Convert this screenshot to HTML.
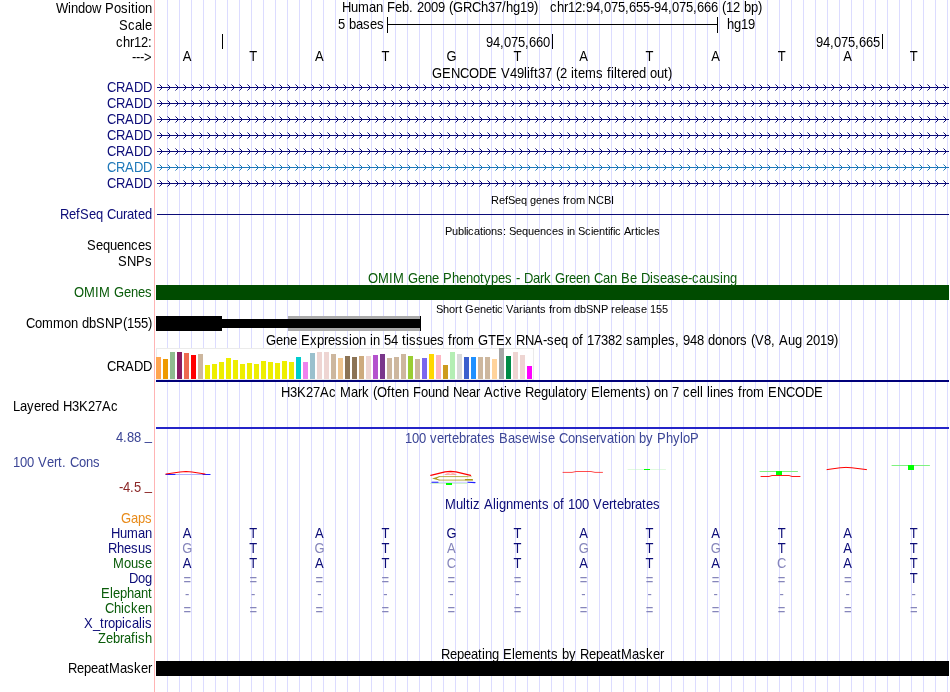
<!DOCTYPE html>
<html><head><meta charset="utf-8"><title>UCSC Genome Browser</title>
<style>
html,body{margin:0;padding:0;background:#fff}
svg{display:block;will-change:transform}
text{font-family:"Liberation Sans",sans-serif;font-size:14px;fill:#000}
.s{font-size:11px}
</style></head><body>
<svg width="950" height="692" viewBox="0 0 950 692">
<defs>
<pattern id="cv" x="156" y="80" width="8" height="16" patternUnits="userSpaceOnUse"><g fill="#0c0c78" shape-rendering="crispEdges"><rect x="0" y="7" width="8" height="1"/><rect x="5" y="6" width="1" height="1"/><rect x="5" y="8" width="1" height="1"/><rect x="4" y="5" width="1" height="1"/><rect x="4" y="9" width="1" height="1"/><rect x="3" y="4" width="1" height="1" opacity=".55"/><rect x="3" y="10" width="1" height="1" opacity=".55"/></g></pattern>
<pattern id="cw" x="156" y="80" width="8" height="16" patternUnits="userSpaceOnUse"><g fill="#1e78b9" shape-rendering="crispEdges"><rect x="0" y="7" width="8" height="1"/><rect x="5" y="6" width="1" height="1"/><rect x="5" y="8" width="1" height="1"/><rect x="4" y="5" width="1" height="1"/><rect x="4" y="9" width="1" height="1"/><rect x="3" y="4" width="1" height="1" opacity=".55"/><rect x="3" y="10" width="1" height="1" opacity=".55"/></g></pattern>
</defs>
<rect width="950" height="692" fill="#fff"/>
<g fill="#dcdcff" shape-rendering="crispEdges">
<rect x="167" y="0" width="1" height="692"/><rect x="179" y="0" width="1" height="692"/><rect x="191" y="0" width="1" height="692"/><rect x="203" y="0" width="1" height="692"/><rect x="215" y="0" width="1" height="692"/><rect x="227" y="0" width="1" height="692"/><rect x="239" y="0" width="1" height="692"/><rect x="251" y="0" width="1" height="692"/><rect x="263" y="0" width="1" height="692"/><rect x="275" y="0" width="1" height="692"/><rect x="287" y="0" width="1" height="692"/><rect x="299" y="0" width="1" height="692"/><rect x="311" y="0" width="1" height="692"/><rect x="323" y="0" width="1" height="692"/><rect x="335" y="0" width="1" height="692"/><rect x="347" y="0" width="1" height="692"/><rect x="359" y="0" width="1" height="692"/><rect x="371" y="0" width="1" height="692"/><rect x="383" y="0" width="1" height="692"/><rect x="395" y="0" width="1" height="692"/><rect x="407" y="0" width="1" height="692"/><rect x="419" y="0" width="1" height="692"/><rect x="431" y="0" width="1" height="692"/><rect x="443" y="0" width="1" height="692"/><rect x="455" y="0" width="1" height="692"/><rect x="467" y="0" width="1" height="692"/><rect x="479" y="0" width="1" height="692"/><rect x="491" y="0" width="1" height="692"/><rect x="503" y="0" width="1" height="692"/><rect x="515" y="0" width="1" height="692"/><rect x="527" y="0" width="1" height="692"/><rect x="539" y="0" width="1" height="692"/><rect x="551" y="0" width="1" height="692"/><rect x="563" y="0" width="1" height="692"/><rect x="575" y="0" width="1" height="692"/><rect x="587" y="0" width="1" height="692"/><rect x="599" y="0" width="1" height="692"/><rect x="611" y="0" width="1" height="692"/><rect x="623" y="0" width="1" height="692"/><rect x="635" y="0" width="1" height="692"/><rect x="647" y="0" width="1" height="692"/><rect x="659" y="0" width="1" height="692"/><rect x="671" y="0" width="1" height="692"/><rect x="683" y="0" width="1" height="692"/><rect x="695" y="0" width="1" height="692"/><rect x="707" y="0" width="1" height="692"/><rect x="719" y="0" width="1" height="692"/><rect x="731" y="0" width="1" height="692"/><rect x="743" y="0" width="1" height="692"/><rect x="755" y="0" width="1" height="692"/><rect x="767" y="0" width="1" height="692"/><rect x="779" y="0" width="1" height="692"/><rect x="791" y="0" width="1" height="692"/><rect x="803" y="0" width="1" height="692"/><rect x="815" y="0" width="1" height="692"/><rect x="827" y="0" width="1" height="692"/><rect x="839" y="0" width="1" height="692"/><rect x="851" y="0" width="1" height="692"/><rect x="863" y="0" width="1" height="692"/><rect x="875" y="0" width="1" height="692"/><rect x="887" y="0" width="1" height="692"/><rect x="899" y="0" width="1" height="692"/><rect x="911" y="0" width="1" height="692"/><rect x="923" y="0" width="1" height="692"/><rect x="935" y="0" width="1" height="692"/><rect x="947" y="0" width="1" height="692"/>
</g>
<rect x="154" y="0" width="1" height="692" fill="#ffb4b4" shape-rendering="crispEdges"/>
<g fill="#000" shape-rendering="crispEdges"><rect x="387" y="24" width="331" height="1"/><rect x="387" y="17" width="1" height="16"/><rect x="717" y="17" width="1" height="16"/><rect x="222" y="34" width="1" height="15"/><rect x="552" y="34" width="1" height="15"/><rect x="882" y="34" width="1" height="15"/></g>
<rect x="157" y="80" width="792" height="16" fill="url(#cv)"/>
<rect x="157" y="96" width="792" height="16" fill="url(#cv)"/>
<rect x="157" y="112" width="792" height="16" fill="url(#cv)"/>
<rect x="157" y="128" width="792" height="16" fill="url(#cv)"/>
<rect x="157" y="144" width="792" height="16" fill="url(#cv)"/>
<rect x="157" y="160" width="792" height="16" fill="url(#cw)"/>
<rect x="157" y="176" width="792" height="16" fill="url(#cv)"/>
<rect x="157" y="214" width="792" height="1" fill="#0c0c78" shape-rendering="crispEdges"/>
<rect x="156" y="285" width="793" height="15" fill="#004b00" shape-rendering="crispEdges"/>
<g shape-rendering="crispEdges"><rect x="288" y="316" width="132" height="15" fill="#aaa"/><rect x="156" y="316" width="66" height="15" fill="#000"/><rect x="222" y="319" width="198" height="9" fill="#000"/><rect x="420" y="316" width="1" height="15" fill="#000"/></g>
<g shape-rendering="crispEdges"><rect x="156" y="348" width="378" height="32" fill="#fff"/><rect x="156" y="348" width="378" height="1" fill="#ebebeb"/><rect x="156" y="379" width="378" height="1" fill="#ebebeb"/><rect x="156" y="348" width="1" height="32" fill="#ebebeb"/><rect x="533" y="348" width="1" height="32" fill="#ebebeb"/>
<rect x="156" y="357" width="5" height="22" fill="#FFA54F"/><rect x="163" y="359" width="5" height="20" fill="#EE9A00"/><rect x="170" y="352" width="5" height="27" fill="#8FBC8F"/><rect x="177" y="352" width="5" height="27" fill="#8B1C62"/><rect x="184" y="353" width="5" height="26" fill="#EE6A50"/><rect x="191" y="355" width="5" height="24" fill="#FF0000"/><rect x="198" y="354" width="5" height="25" fill="#CDB79E"/><rect x="205" y="365" width="5" height="14" fill="#EEEE00"/><rect x="212" y="364" width="5" height="15" fill="#EEEE00"/><rect x="219" y="362" width="5" height="17" fill="#EEEE00"/><rect x="226" y="358" width="5" height="21" fill="#EEEE00"/><rect x="233" y="360" width="5" height="19" fill="#EEEE00"/><rect x="240" y="364" width="5" height="15" fill="#EEEE00"/><rect x="247" y="363" width="5" height="16" fill="#EEEE00"/><rect x="254" y="364" width="5" height="15" fill="#EEEE00"/><rect x="261" y="361" width="5" height="18" fill="#EEEE00"/><rect x="268" y="362" width="5" height="17" fill="#EEEE00"/><rect x="275" y="363" width="5" height="16" fill="#EEEE00"/><rect x="282" y="361" width="5" height="18" fill="#EEEE00"/><rect x="289" y="362" width="5" height="17" fill="#EEEE00"/><rect x="296" y="357" width="5" height="22" fill="#00CDCD"/><rect x="303" y="362" width="5" height="17" fill="#EE82EE"/><rect x="310" y="353" width="5" height="26" fill="#9AC0CD"/><rect x="317" y="352" width="5" height="27" fill="#EED5D2"/><rect x="324" y="352" width="5" height="27" fill="#EED5D2"/><rect x="331" y="354" width="5" height="25" fill="#CDB79E"/><rect x="338" y="358" width="5" height="21" fill="#EEC591"/><rect x="345" y="356" width="5" height="23" fill="#8B7355"/><rect x="352" y="357" width="5" height="22" fill="#8B7355"/><rect x="359" y="356" width="5" height="23" fill="#CDAA7D"/><rect x="366" y="356" width="5" height="23" fill="#EED5D2"/><rect x="373" y="355" width="5" height="24" fill="#B452CD"/><rect x="380" y="354" width="5" height="25" fill="#7A378B"/><rect x="387" y="358" width="5" height="21" fill="#CDB79E"/><rect x="394" y="357" width="5" height="22" fill="#CDB79E"/><rect x="401" y="354" width="5" height="25" fill="#CDB79E"/><rect x="408" y="356" width="5" height="23" fill="#9ACD32"/><rect x="415" y="359" width="5" height="20" fill="#CDB79E"/><rect x="422" y="358" width="5" height="21" fill="#7A67EE"/><rect x="429" y="354" width="5" height="25" fill="#FFD700"/><rect x="436" y="355" width="5" height="24" fill="#FFB6C1"/><rect x="443" y="365" width="5" height="14" fill="#CD9B1D"/><rect x="450" y="352" width="5" height="27" fill="#B4EEB4"/><rect x="457" y="354" width="5" height="25" fill="#D9D9D9"/><rect x="464" y="357" width="5" height="22" fill="#3A5FCD"/><rect x="471" y="357" width="5" height="22" fill="#1E90FF"/><rect x="478" y="357" width="5" height="22" fill="#CDB79E"/><rect x="485" y="357" width="5" height="22" fill="#CDB79E"/><rect x="492" y="359" width="5" height="20" fill="#FFD39B"/><rect x="499" y="348" width="5" height="31" fill="#A6A6A6"/><rect x="506" y="356" width="5" height="23" fill="#008B45"/><rect x="513" y="352" width="5" height="27" fill="#EED5D2"/><rect x="520" y="355" width="5" height="24" fill="#EED5D2"/><rect x="527" y="366" width="5" height="13" fill="#FF00FF"/>
<rect x="156" y="380" width="793" height="2" fill="#00007a"/></g>
<rect x="156" y="427" width="793" height="2" fill="#2424c8" shape-rendering="crispEdges"/>
<g fill="none" stroke-width="1.2" stroke-linecap="round" stroke-linejoin="round">
<path d="M166 474.5H210" stroke="#b0b0ff" stroke-width="1"/><path d="M166 474.5H175M203 474.5H210" stroke="#2020ff" stroke-width="1"/>
<path d="M166 474 L180 472 L186 471.5 L192 472 L205 474" stroke="#f00"/>
<path d="M430.8 475.4 L445 471.9 L450.5 471.3 L456 471.9 L470.6 475.4" stroke="#f00" stroke-width="1.2"/><path d="M445 474.5H456M446 474.2L450.5 472.7L455 474.2" stroke="#ff8c8c" stroke-width="0.7"/>
<path d="M439 476.6H468M439 480.1H472.6" stroke="#a89a1a" stroke-width="0.8"/><path d="M468 476.6H471.5" stroke="#cfc680" stroke-width="0.8"/><path d="M439.5 476.2 L432 478.4 L439.5 480.5 L439.5 479.7 L436.5 478.4 L439.5 477 Z" fill="#a89a1a" stroke="none"/><path d="M465.5 479.7H472.3" stroke="#a89a1a" stroke-width="1.3"/>
<path d="M432 482.3H475" stroke="#c8c8ff" stroke-width="0.9"/><path d="M432 482.3H438M468 482.3L475 482.6" stroke="#2020ff" stroke-width="1.1"/>
<path d="M430.5 483.5H467" stroke="#b0f0b0" stroke-width="0.6"/><rect x="446" y="483" width="6" height="2" fill="#0f0" stroke="none" shape-rendering="crispEdges"/>
<path d="M563 472.4 H572 L576 471.5 H591 L595 472.4 H602.5" stroke="#f00" stroke-width="0.7"/>
<path d="M628 469.5H665.5" stroke="#c0f4c0" stroke-width="0.5"/><rect x="644" y="469" width="6" height="1" fill="#0f0" stroke="none" shape-rendering="crispEdges"/>
<path d="M760 471.5H797.5" stroke="#70f070" stroke-width="0.9"/><rect x="776" y="471" width="6" height="4" fill="#0f0" stroke="none" shape-rendering="crispEdges"/>
<path d="M761 476.5 H769 L772 475.5 H789 L792 476.5 H800" stroke="#f00" stroke-width="0.9"/>
<path d="M827 469.6 L840 467.8 L846 467.4 L852 467.8 L866.5 469.6" stroke="#f00" stroke-width="1"/>
<path d="M892 465.5H929.5" stroke="#70f070" stroke-width="0.9"/><rect x="908" y="465" width="6" height="5" fill="#0f0" stroke="none" shape-rendering="crispEdges"/>
</g>
<rect x="156" y="661" width="793" height="15" fill="#000" shape-rendering="crispEdges"/>
<text transform="translate(56.00 13) scale(0.92857 1)" x="0 12.9 16.2 23.7 31.2 38.8 48.5 52.8 62.5 70 77.5 80.8 85.1 88.3 95.8" y="0">Window Position</text>
<text transform="translate(119.00 30) scale(0.92857 1)" x="0 9.7 17.2 24.8 28" y="0">Scale</text>
<text transform="translate(116.00 47) scale(0.92857 1)" x="0 7.5 15.1 19.4 26.9 34.5" y="0">chr12:</text>
<text transform="translate(132.00 62) scale(0.92857 1)" x="0 4.3 8.6 12.9" y="0">---&gt;</text>
<text transform="translate(107.00 92) scale(0.92857 1)" x="0 9.7 19.4 29.1 38.8" y="0" fill="#0c0c78" style="fill:#0c0c78">CRADD</text>
<text transform="translate(107.00 108) scale(0.92857 1)" x="0 9.7 19.4 29.1 38.8" y="0" fill="#0c0c78" style="fill:#0c0c78">CRADD</text>
<text transform="translate(107.00 124) scale(0.92857 1)" x="0 9.7 19.4 29.1 38.8" y="0" fill="#0c0c78" style="fill:#0c0c78">CRADD</text>
<text transform="translate(107.00 140) scale(0.92857 1)" x="0 9.7 19.4 29.1 38.8" y="0" fill="#0c0c78" style="fill:#0c0c78">CRADD</text>
<text transform="translate(107.00 156) scale(0.92857 1)" x="0 9.7 19.4 29.1 38.8" y="0" fill="#0c0c78" style="fill:#0c0c78">CRADD</text>
<text transform="translate(107.00 172) scale(0.92857 1)" x="0 9.7 19.4 29.1 38.8" y="0" fill="#1e78b9" style="fill:#1e78b9">CRADD</text>
<text transform="translate(107.00 188) scale(0.92857 1)" x="0 9.7 19.4 29.1 38.8" y="0" fill="#0c0c78" style="fill:#0c0c78">CRADD</text>
<text transform="translate(60.00 219) scale(0.92857 1)" x="0 9.7 17.2 21.5 31.2 38.8 46.3 50.6 60.3 67.8 72.2 79.7 84 91.5" y="0" fill="#0c0c78" style="fill:#0c0c78">RefSeq Curated</text>
<text transform="translate(87.00 250) scale(0.92857 1)" x="0 9.7 17.2 24.8 32.3 39.8 47.4 54.9 62.5" y="0">Sequences</text>
<text transform="translate(118.00 266) scale(0.92857 1)" x="0 9.7 19.4 29.1" y="0">SNPs</text>
<text transform="translate(74.00 297) scale(0.92857 1)" x="0 10.8 22.6 26.9 38.8 43.1 53.8 61.4 68.9 76.5" y="0" fill="#0a5c0a" style="fill:#0a5c0a">OMIM Genes</text>
<text transform="translate(26.00 328) scale(0.92857 1)" x="0 9.7 17.2 29.1 40.9 48.5 56 60.3 67.8 75.4 85.1 94.8 104.5 108.8 116.3 123.8 131.4" y="0">Common dbSNP(155)</text>
<text transform="translate(107.00 371) scale(0.92857 1)" x="0 9.7 19.4 29.1 38.8" y="0">CRADD</text>
<text transform="translate(13.00 411) scale(0.92857 1)" x="0 7.5 15.1 22.6 30.2 34.5 42 49.5 53.8 63.5 71.1 80.8 88.3 95.8 105.5" y="0">Layered H3K27Ac</text>
<text transform="translate(116.00 442) scale(0.92857 1)" x="0 7.5 11.8 19.4" y="0" fill="#3c4696" style="fill:#3c4696">4.88</text>
<text transform="translate(144.66 440) scale(0.92857 1)" x="0" y="0" fill="#3c4696" style="fill:#3c4696">_</text>
<text transform="translate(13.00 467) scale(0.92857 1)" x="0 7.5 15.1 22.6 26.9 36.6 44.2 48.5 52.8 57.1 61.4 71.1 78.6 86.2" y="0" fill="#3c4696" style="fill:#3c4696">100 Vert. Cons</text>
<text transform="translate(119.00 492) scale(0.92857 1)" x="0 4.3 11.8 16.2" y="0" fill="#8c2828" style="fill:#8c2828">-4.5</text>
<text transform="translate(144.66 490) scale(0.92857 1)" x="0" y="0" fill="#8c2828" style="fill:#8c2828">_</text>
<text transform="translate(121.00 523) scale(0.92857 1)" x="0 10.8 18.3 25.8" y="0" fill="#e88b1a" style="fill:#e88b1a">Gaps</text>
<text transform="translate(111.00 538) scale(0.92857 1)" x="0 9.7 17.2 29.1 36.6" y="0" fill="#0c0c78" style="fill:#0c0c78">Human</text>
<text transform="translate(108.00 553) scale(0.92857 1)" x="0 9.7 17.2 24.8 32.3 39.8" y="0" fill="#0c0c78" style="fill:#0c0c78">Rhesus</text>
<text transform="translate(113.00 568) scale(0.92857 1)" x="0 11.8 19.4 26.9 34.5" y="0" fill="#0a5c0a" style="fill:#0a5c0a">Mouse</text>
<text transform="translate(129.00 583) scale(0.92857 1)" x="0 9.7 17.2" y="0" fill="#0c0c78" style="fill:#0c0c78">Dog</text>
<text transform="translate(101.00 598) scale(0.92857 1)" x="0 9.7 12.9 20.5 28 35.5 43.1 50.6" y="0" fill="#0a5c0a" style="fill:#0a5c0a">Elephant</text>
<text transform="translate(105.00 613) scale(0.92857 1)" x="0 9.7 17.2 20.5 28 35.5 43.1" y="0" fill="#0a5c0a" style="fill:#0a5c0a">Chicken</text>
<text transform="translate(84.00 628) scale(0.92857 1)" x="0 9.7 17.2 21.5 25.8 33.4 40.9 44.2 51.7 59.2 62.5 65.7" y="0" fill="#0c0c78" style="fill:#0c0c78">X_tropicalis</text>
<text transform="translate(98.00 643) scale(0.92857 1)" x="0 8.6 16.2 23.7 28 35.5 39.8 43.1 50.6" y="0" fill="#0a5c0a" style="fill:#0a5c0a">Zebrafish</text>
<text transform="translate(68.00 673) scale(0.92857 1)" x="0 9.7 17.2 24.8 32.3 39.8 44.2 56 63.5 71.1 78.6 86.2" y="0">RepeatMasker</text>
<text transform="translate(342.00 12) scale(0.92857 1)" x="0 9.7 17.2 29.1 36.6 44.2 48.5 57.1 64.6 72.2 76.5 80.8 88.3 95.8 103.4 110.9 115.2 119.5 130.3 140 149.7 157.2 164.8 172.3 176.6 184.2 191.7 199.2 206.8" y="0">Human Feb. 2009 (GRCh37/hg19)</text>
<text transform="translate(550.00 12) scale(0.92857 1)" x="0 7.5 15.1 19.4 26.9 34.5 38.8 46.3 53.8 58.2 65.7 73.2 80.8 85.1 92.6 100.2 107.7 112 119.5 127.1 131.4 138.9 146.5 154 158.3 165.8 173.4 180.9 185.2 189.5 197.1 204.6 208.9 216.5 224" y="0">chr12:94,075,655-94,075,666 (12 bp)</text>
<text transform="translate(338.00 29) scale(0.92857 1)" x="0 7.5 11.8 19.4 26.9 34.5 42" y="0">5 bases</text>
<text transform="translate(727.00 29) scale(0.92857 1)" x="0 7.5 15.1 22.6" y="0">hg19</text>
<text transform="translate(486.00 47) scale(0.92857 1)" x="0 7.5 15.1 19.4 26.9 34.5 42 46.3 53.8 61.4" y="0">94,075,660</text>
<text transform="translate(816.00 47) scale(0.92857 1)" x="0 7.5 15.1 19.4 26.9 34.5 42 46.3 53.8 61.4" y="0">94,075,665</text>
<text transform="translate(182.86 61) scale(0.92857 1)" x="0" y="0">A</text>
<text transform="translate(249.29 61) scale(0.92857 1)" x="0" y="0">T</text>
<text transform="translate(314.96 61) scale(0.92857 1)" x="0" y="0">A</text>
<text transform="translate(381.39 61) scale(0.92857 1)" x="0" y="0">T</text>
<text transform="translate(446.55 61) scale(0.92857 1)" x="0" y="0">G</text>
<text transform="translate(513.49 61) scale(0.92857 1)" x="0" y="0">T</text>
<text transform="translate(579.16 61) scale(0.92857 1)" x="0" y="0">A</text>
<text transform="translate(645.59 61) scale(0.92857 1)" x="0" y="0">T</text>
<text transform="translate(711.26 61) scale(0.92857 1)" x="0" y="0">A</text>
<text transform="translate(777.69 61) scale(0.92857 1)" x="0" y="0">T</text>
<text transform="translate(843.36 61) scale(0.92857 1)" x="0" y="0">A</text>
<text transform="translate(909.79 61) scale(0.92857 1)" x="0" y="0">T</text>
<text transform="translate(432.00 78) scale(0.92857 1)" x="0 10.8 20.5 30.2 39.8 50.6 60.3 70 74.3 84 91.5 99.1 102.3 105.5 109.8 114.2 121.7 129.2 133.5 137.8 145.4 149.7 152.9 157.2 164.8 176.6 184.2 188.5 192.8 196 199.2 203.5 211.1 215.4 222.9 230.5 234.8 242.3 249.8 254.2" y="0">GENCODE V49lift37 (2 items filtered out)</text>
<text transform="translate(491.00 204) scale(1.00000 1)" x="0 8 14 17 24 30 36 39 45 51 57 63 69 72 75 79 85 94 97 105 113 120" y="0" class="s">RefSeq genes from NCBI</text>
<text transform="translate(445.00 235) scale(1.00000 1)" x="0 7 13 19 21 23 29 35 38 40 46 52 58 61 64 71 77 83 89 95 101 107 113 119 122 124 130 133 140 146 148 154 160 163 165 168 170 176 179 186 190 193 195 201 203 209" y="0" class="s">Publications: Sequences in Scientific Articles</text>
<text transform="translate(368.00 283) scale(0.92857 1)" x="0 10.8 22.6 26.9 38.8 43.1 53.8 61.4 68.9 76.5 80.8 90.5 98 105.5 113.1 120.6 124.9 132.5 140 147.5 155.1 159.4 163.7 168 177.7 185.2 189.5 197.1 201.4 212.2 216.5 224 231.5 239.1 243.4 253.1 260.6 268.2 272.5 282.2 289.7 294 303.7 306.9 314.5 322 329.5 337.1 344.6 348.9 356.5 364 371.5 379.1 382.3 389.8" y="0" fill="#0a5c0a" style="fill:#0a5c0a">OMIM Gene Phenotypes - Dark Green Can Be Disease-causing</text>
<text transform="translate(436.00 313) scale(1.00000 1)" x="0 7 13 19 23 26 29 38 44 50 56 59 61 67 70 77 83 87 89 95 101 104 110 113 116 120 126 135 138 144 150 157 165 172 175 179 185 187 193 199 205 211 214 220 226" y="0" class="s">Short Genetic Variants from dbSNP release 155</text>
<text transform="translate(266.00 345) scale(0.92857 1)" x="0 10.8 18.3 25.8 33.4 37.7 47.4 54.9 62.5 66.8 74.3 81.8 89.4 92.6 100.2 107.7 112 115.2 122.8 127.1 134.6 142.2 146.5 150.8 154 161.5 169.1 176.6 184.2 191.7 196 200.3 204.6 212.2 224 228.3 239.1 247.7 257.4 264.9 269.2 278.9 288.6 298.3 302.6 310.2 317.7 325.2 329.5 337.1 341.4 345.7 353.2 360.8 368.3 375.8 383.4 387.7 395.2 402.8 414.6 422.2 425.4 432.9 440.5 444.8 449.1 456.6 464.2 471.7 476 483.5 491.1 498.6 506.2 510.5 518 522.3 526.6 536.3 543.8 548.2 552.5 562.2 569.7 577.2 581.5 589.1 596.6 604.2 611.7" y="0">Gene Expression in 54 tissues from GTEx RNA-seq of 17382 samples, 948 donors (V8, Aug 2019)</text>
<text transform="translate(281.00 397) scale(0.92857 1)" x="0 9.7 17.2 26.9 34.5 42 51.7 59.2 63.5 75.4 82.9 87.2 94.8 99.1 103.4 114.2 118.5 122.8 130.3 137.8 142.2 150.8 158.3 165.8 173.4 180.9 185.2 194.9 202.5 210 214.3 218.6 228.3 235.8 240.2 243.4 250.9 258.5 262.8 272.5 280 287.5 295.1 298.3 305.8 310.2 317.7 322 329.5 333.8 343.5 346.8 354.3 366.2 373.7 381.2 385.5 393.1 397.4 401.7 409.2 416.8 421.1 428.6 432.9 440.5 448 451.2 454.5 458.8 462 465.2 472.8 480.3 487.8 492.2 496.5 500.8 508.3 520.2 524.5 534.2 543.8 553.5 564.3 574" y="0">H3K27Ac Mark (Often Found Near Active Regulatory Elements) on 7 cell lines from ENCODE</text>
<text transform="translate(405.00 443) scale(0.92857 1)" x="0 7.5 15.1 22.6 26.9 34.5 42 46.3 50.6 58.2 65.7 70 77.5 81.8 89.4 96.9 101.2 110.9 118.5 126 133.5 143.2 146.5 154 161.5 165.8 175.5 183.1 190.6 198.2 205.7 210 217.5 225.1 229.4 232.6 240.2 247.7 252 259.5 267.1 271.4 281.1 288.6 296.2 299.4 306.9" y="0" fill="#3c4696" style="fill:#3c4696">100 vertebrates Basewise Conservation by PhyloP</text>
<text transform="translate(445.00 509) scale(0.92857 1)" x="0 11.8 19.4 22.6 26.9 30.2 37.7 42 51.7 54.9 58.2 65.7 73.2 85.1 92.6 100.2 104.5 112 116.3 123.8 128.2 132.5 140 147.5 155.1 159.4 169.1 176.6 180.9 185.2 192.8 200.3 204.6 212.2 216.5 224" y="0" fill="#0c0c78" style="fill:#0c0c78">Multiz Alignments of 100 Vertebrates</text>
<text transform="translate(441.00 659) scale(0.92857 1)" x="0 9.7 17.2 24.8 32.3 39.8 44.2 47.4 54.9 62.5 66.8 76.5 79.7 87.2 99.1 106.6 114.2 118.5 126 130.3 137.8 145.4 149.7 159.4 166.9 174.5 182 189.5 193.8 205.7 213.2 220.8 228.3 235.8" y="0">Repeating Elements by RepeatMasker</text>
<text transform="translate(182.86 538) scale(0.92857 1)" x="0" y="0" fill="#0c0c78" style="fill:#0c0c78">A</text>
<text transform="translate(249.29 538) scale(0.92857 1)" x="0" y="0" fill="#0c0c78" style="fill:#0c0c78">T</text>
<text transform="translate(314.96 538) scale(0.92857 1)" x="0" y="0" fill="#0c0c78" style="fill:#0c0c78">A</text>
<text transform="translate(381.39 538) scale(0.92857 1)" x="0" y="0" fill="#0c0c78" style="fill:#0c0c78">T</text>
<text transform="translate(446.55 538) scale(0.92857 1)" x="0" y="0" fill="#0c0c78" style="fill:#0c0c78">G</text>
<text transform="translate(513.49 538) scale(0.92857 1)" x="0" y="0" fill="#0c0c78" style="fill:#0c0c78">T</text>
<text transform="translate(579.16 538) scale(0.92857 1)" x="0" y="0" fill="#0c0c78" style="fill:#0c0c78">A</text>
<text transform="translate(645.59 538) scale(0.92857 1)" x="0" y="0" fill="#0c0c78" style="fill:#0c0c78">T</text>
<text transform="translate(711.26 538) scale(0.92857 1)" x="0" y="0" fill="#0c0c78" style="fill:#0c0c78">A</text>
<text transform="translate(777.69 538) scale(0.92857 1)" x="0" y="0" fill="#0c0c78" style="fill:#0c0c78">T</text>
<text transform="translate(843.36 538) scale(0.92857 1)" x="0" y="0" fill="#0c0c78" style="fill:#0c0c78">A</text>
<text transform="translate(909.79 538) scale(0.92857 1)" x="0" y="0" fill="#0c0c78" style="fill:#0c0c78">T</text>
<text transform="translate(182.35 553) scale(0.92857 1)" x="0" y="0" fill="#8686bb" style="fill:#8686bb">G</text>
<text transform="translate(249.29 553) scale(0.92857 1)" x="0" y="0" fill="#0c0c78" style="fill:#0c0c78">T</text>
<text transform="translate(314.45 553) scale(0.92857 1)" x="0" y="0" fill="#8686bb" style="fill:#8686bb">G</text>
<text transform="translate(381.39 553) scale(0.92857 1)" x="0" y="0" fill="#0c0c78" style="fill:#0c0c78">T</text>
<text transform="translate(447.06 553) scale(0.92857 1)" x="0" y="0" fill="#8686bb" style="fill:#8686bb">A</text>
<text transform="translate(513.49 553) scale(0.92857 1)" x="0" y="0" fill="#0c0c78" style="fill:#0c0c78">T</text>
<text transform="translate(578.65 553) scale(0.92857 1)" x="0" y="0" fill="#8686bb" style="fill:#8686bb">G</text>
<text transform="translate(645.59 553) scale(0.92857 1)" x="0" y="0" fill="#0c0c78" style="fill:#0c0c78">T</text>
<text transform="translate(710.75 553) scale(0.92857 1)" x="0" y="0" fill="#8686bb" style="fill:#8686bb">G</text>
<text transform="translate(777.69 553) scale(0.92857 1)" x="0" y="0" fill="#0c0c78" style="fill:#0c0c78">T</text>
<text transform="translate(843.36 553) scale(0.92857 1)" x="0" y="0" fill="#0c0c78" style="fill:#0c0c78">A</text>
<text transform="translate(909.79 553) scale(0.92857 1)" x="0" y="0" fill="#0c0c78" style="fill:#0c0c78">T</text>
<text transform="translate(182.86 568) scale(0.92857 1)" x="0" y="0" fill="#0c0c78" style="fill:#0c0c78">A</text>
<text transform="translate(249.29 568) scale(0.92857 1)" x="0" y="0" fill="#0c0c78" style="fill:#0c0c78">T</text>
<text transform="translate(314.96 568) scale(0.92857 1)" x="0" y="0" fill="#0c0c78" style="fill:#0c0c78">A</text>
<text transform="translate(381.39 568) scale(0.92857 1)" x="0" y="0" fill="#0c0c78" style="fill:#0c0c78">T</text>
<text transform="translate(446.79 568) scale(0.92857 1)" x="0" y="0" fill="#8686bb" style="fill:#8686bb">C</text>
<text transform="translate(513.49 568) scale(0.92857 1)" x="0" y="0" fill="#0c0c78" style="fill:#0c0c78">T</text>
<text transform="translate(579.16 568) scale(0.92857 1)" x="0" y="0" fill="#0c0c78" style="fill:#0c0c78">A</text>
<text transform="translate(645.59 568) scale(0.92857 1)" x="0" y="0" fill="#0c0c78" style="fill:#0c0c78">T</text>
<text transform="translate(711.26 568) scale(0.92857 1)" x="0" y="0" fill="#0c0c78" style="fill:#0c0c78">A</text>
<text transform="translate(777.04 568) scale(0.92857 1)" x="0" y="0" fill="#8686bb" style="fill:#8686bb">C</text>
<text transform="translate(843.36 568) scale(0.92857 1)" x="0" y="0" fill="#0c0c78" style="fill:#0c0c78">A</text>
<text transform="translate(909.79 568) scale(0.92857 1)" x="0" y="0" fill="#0c0c78" style="fill:#0c0c78">T</text>
<text transform="translate(183.41 585) scale(0.92857 1)" x="0" y="0" fill="#8686bb" style="fill:#8686bb">=</text>
<text transform="translate(249.46 585) scale(0.92857 1)" x="0" y="0" fill="#8686bb" style="fill:#8686bb">=</text>
<text transform="translate(315.51 585) scale(0.92857 1)" x="0" y="0" fill="#8686bb" style="fill:#8686bb">=</text>
<text transform="translate(381.56 585) scale(0.92857 1)" x="0" y="0" fill="#8686bb" style="fill:#8686bb">=</text>
<text transform="translate(447.61 585) scale(0.92857 1)" x="0" y="0" fill="#8686bb" style="fill:#8686bb">=</text>
<text transform="translate(513.66 585) scale(0.92857 1)" x="0" y="0" fill="#8686bb" style="fill:#8686bb">=</text>
<text transform="translate(579.71 585) scale(0.92857 1)" x="0" y="0" fill="#8686bb" style="fill:#8686bb">=</text>
<text transform="translate(645.76 585) scale(0.92857 1)" x="0" y="0" fill="#8686bb" style="fill:#8686bb">=</text>
<text transform="translate(711.81 585) scale(0.92857 1)" x="0" y="0" fill="#8686bb" style="fill:#8686bb">=</text>
<text transform="translate(777.86 585) scale(0.92857 1)" x="0" y="0" fill="#8686bb" style="fill:#8686bb">=</text>
<text transform="translate(843.91 585) scale(0.92857 1)" x="0" y="0" fill="#8686bb" style="fill:#8686bb">=</text>
<text transform="translate(909.79 583) scale(0.92857 1)" x="0" y="0" fill="#0c0c78" style="fill:#0c0c78">T</text>
<text transform="translate(185.05 599) scale(0.92857 1)" x="0" y="0" fill="#8686bb" style="fill:#8686bb">-</text>
<text transform="translate(251.10 599) scale(0.92857 1)" x="0" y="0" fill="#8686bb" style="fill:#8686bb">-</text>
<text transform="translate(317.15 599) scale(0.92857 1)" x="0" y="0" fill="#8686bb" style="fill:#8686bb">-</text>
<text transform="translate(383.20 599) scale(0.92857 1)" x="0" y="0" fill="#8686bb" style="fill:#8686bb">-</text>
<text transform="translate(449.25 599) scale(0.92857 1)" x="0" y="0" fill="#8686bb" style="fill:#8686bb">-</text>
<text transform="translate(515.30 599) scale(0.92857 1)" x="0" y="0" fill="#8686bb" style="fill:#8686bb">-</text>
<text transform="translate(581.35 599) scale(0.92857 1)" x="0" y="0" fill="#8686bb" style="fill:#8686bb">-</text>
<text transform="translate(647.40 599) scale(0.92857 1)" x="0" y="0" fill="#8686bb" style="fill:#8686bb">-</text>
<text transform="translate(713.45 599) scale(0.92857 1)" x="0" y="0" fill="#8686bb" style="fill:#8686bb">-</text>
<text transform="translate(779.50 599) scale(0.92857 1)" x="0" y="0" fill="#8686bb" style="fill:#8686bb">-</text>
<text transform="translate(845.55 599) scale(0.92857 1)" x="0" y="0" fill="#8686bb" style="fill:#8686bb">-</text>
<text transform="translate(911.60 599) scale(0.92857 1)" x="0" y="0" fill="#8686bb" style="fill:#8686bb">-</text>
<text transform="translate(183.41 615) scale(0.92857 1)" x="0" y="0" fill="#8686bb" style="fill:#8686bb">=</text>
<text transform="translate(249.46 615) scale(0.92857 1)" x="0" y="0" fill="#8686bb" style="fill:#8686bb">=</text>
<text transform="translate(315.51 615) scale(0.92857 1)" x="0" y="0" fill="#8686bb" style="fill:#8686bb">=</text>
<text transform="translate(381.56 615) scale(0.92857 1)" x="0" y="0" fill="#8686bb" style="fill:#8686bb">=</text>
<text transform="translate(447.61 615) scale(0.92857 1)" x="0" y="0" fill="#8686bb" style="fill:#8686bb">=</text>
<text transform="translate(513.66 615) scale(0.92857 1)" x="0" y="0" fill="#8686bb" style="fill:#8686bb">=</text>
<text transform="translate(579.71 615) scale(0.92857 1)" x="0" y="0" fill="#8686bb" style="fill:#8686bb">=</text>
<text transform="translate(645.76 615) scale(0.92857 1)" x="0" y="0" fill="#8686bb" style="fill:#8686bb">=</text>
<text transform="translate(711.81 615) scale(0.92857 1)" x="0" y="0" fill="#8686bb" style="fill:#8686bb">=</text>
<text transform="translate(777.86 615) scale(0.92857 1)" x="0" y="0" fill="#8686bb" style="fill:#8686bb">=</text>
<text transform="translate(843.91 615) scale(0.92857 1)" x="0" y="0" fill="#8686bb" style="fill:#8686bb">=</text>
<text transform="translate(909.96 615) scale(0.92857 1)" x="0" y="0" fill="#8686bb" style="fill:#8686bb">=</text>
</svg>
</body></html>
